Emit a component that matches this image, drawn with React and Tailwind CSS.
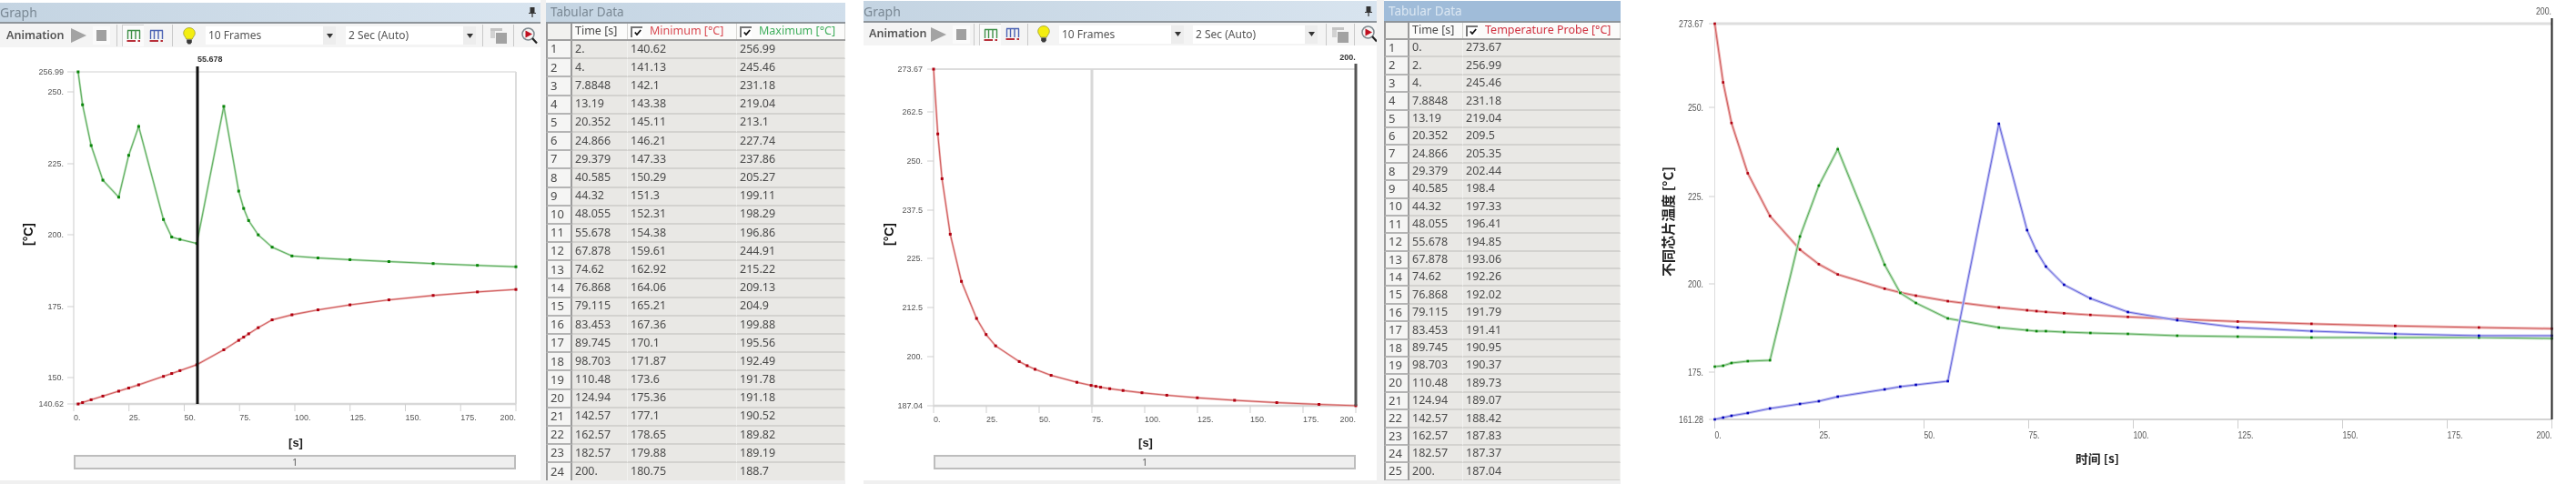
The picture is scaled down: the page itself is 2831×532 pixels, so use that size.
const T1 = [
  ["2.", "140.62", "256.99"], ["4.", "141.13", "245.46"], ["7.8848", "142.1", "231.18"], ["13.19", "143.38", "219.04"],
  ["20.352", "145.11", "213.1"], ["24.866", "146.21", "227.74"], ["29.379", "147.33", "237.86"], ["40.585", "150.29", "205.27"],
  ["44.32", "151.3", "199.11"], ["48.055", "152.31", "198.29"], ["55.678", "154.38", "196.86"], ["67.878", "159.61", "244.91"],
  ["74.62", "162.92", "215.22"], ["76.868", "164.06", "209.13"], ["79.115", "165.21", "204.9"], ["83.453", "167.36", "199.88"],
  ["89.745", "170.1", "195.56"], ["98.703", "171.87", "192.49"], ["110.48", "173.6", "191.78"], ["124.94", "175.36", "191.18"],
  ["142.57", "177.1", "190.52"], ["162.57", "178.65", "189.82"], ["182.57", "179.88", "189.19"], ["200.", "180.75", "188.7"],
];
const T2 = [
  ["0.", "273.67"], ["2.", "256.99"], ["4.", "245.46"], ["7.8848", "231.18"], ["13.19", "219.04"], ["20.352", "209.5"],
  ["24.866", "205.35"], ["29.379", "202.44"], ["40.585", "198.4"], ["44.32", "197.33"], ["48.055", "196.41"], ["55.678", "194.85"],
  ["67.878", "193.06"], ["74.62", "192.26"], ["76.868", "192.02"], ["79.115", "191.79"], ["83.453", "191.41"], ["89.745", "190.95"],
  ["98.703", "190.37"], ["110.48", "189.73"], ["124.94", "189.07"], ["142.57", "188.42"], ["162.57", "187.83"], ["182.57", "187.37"],
  ["200.", "187.04"],
];
const GREEN3 = [403, 402, 399, 397, 396, 260, 204, 164, 291, 322, 333, 350, 360, 363, 364, 364, 365, 366, 367, 369, 370, 371, 371, 371, 372];
const BLUE3 = [461, 459, 457, 454, 449, 444, 441, 436, 428, 425, 423, 419, 136, 253, 276, 293, 313, 328, 343, 352, 360, 364, 367, 369, 369];

const RED = { halo: "#eeb4b4", line: "#cf5c5c", dot: "#b00010" };
const GRN = { halo: "#b9e0b9", line: "#5cab5c", dot: "#0a860a" };
const BLU = { halo: "#c2c2f2", line: "#6565dc", dot: "#0000b8" };
const LABEL = '"Liberation Sans", sans-serif';

function Series({ pts, c, size = 3, halo = 2.4, line = 1 }) {
  const p = pts.map((q) => q.join(",")).join(" ");
  return (
    <g>
      <polyline points={p} fill="none" stroke={c.halo} strokeWidth={halo} />
      <polyline points={p} fill="none" stroke={c.line} strokeWidth={line} />
      {pts.map((q, i) => (
        <rect key={i} x={q[0] - size / 2} y={q[1] - size / 2} width={size} height={size} fill={c.dot} />
      ))}
    </g>
  );
}

function SmallText({ x, y, anchor = "end", children, size = 9, len }) {
  return (
    <text x={x} y={y} textAnchor={anchor} fontSize={size} fontFamily={LABEL} fill="#555" textLength={len} lengthAdjust={len ? "spacingAndGlyphs" : undefined}>
      {children}
    </text>
  );
}

function Axes({ l, r, t, b, xs, ys, xw, tickY, labelX, labelY, topW = 1, grid = "#d0d0d0" }) {
  return (
    <g>
      <line x1={l} x2={r} y1={t} y2={t} stroke={grid} strokeWidth={topW} />
      <line x1={l} x2={l} y1={t} y2={b} stroke="#dcdcdc" strokeWidth="1.5" />
      <line x1={r} x2={r} y1={t} y2={b} stroke="#dcdcdc" strokeWidth="2" />
      <line x1={l} x2={r} y1={b} y2={b} stroke="#d8d8d8" strokeWidth="2.5" />
      {ys.map(([lab, y], i) => (
        <g key={i}>
          <line x1={l - tickY} x2={l} y1={y} y2={y} stroke="#cfcfcf" />
          <SmallText x={labelX} y={y + 3}>{lab}</SmallText>
        </g>
      ))}
      {xs.map((lab, i) => {
        const x = l + (i * xw) / 8;
        return (
          <g key={i}>
            <line x1={x} x2={x} y1={b} y2={b + 8} stroke="#cfcfcf" />
            <SmallText x={x} y={labelY} anchor={i === 8 ? "end" : "start"}>{lab}</SmallText>
          </g>
        );
      })}
    </g>
  );
}

const XL = ["0.", "25.", "50.", "75.", "100.", "125.", "150.", "175.", "200."];

function Chart1() {
  const X = (t) => 81 + parseFloat(t) * 2.43;
  const Y = (v) => 79 + (256.99 - parseFloat(v)) * 3.137;
  return (
    <svg className="h-[448px] w-[594px] shrink-0" viewBox="0 52 594 448">
      <Axes l={81} r={567} t={79} b={444} xw={486} tickY={7} labelX={70} labelY={462} xs={XL}
        ys={[["256.99", 79], ["250.", 101], ["225.", 180], ["200.", 258], ["175.", 337], ["150.", 415], ["140.62", 444]]} />
      <Series pts={T1.map((r) => [X(r[0]), Y(r[2])])} c={GRN} />
      <Series pts={T1.map((r) => [X(r[0]), Y(r[1])])} c={RED} />
      <rect x={215.5} y={73} width={3} height={371} fill="#111" />
      <text x={217} y={68} fontSize="9" fontWeight="700" fontFamily={LABEL} fill="#333">55.678</text>
      <text transform="translate(36 270) rotate(-90)" fontSize="14" fontWeight="700" fontFamily={LABEL} fill="#111">[°C]</text>
      <text x={325} y={491} textAnchor="middle" fontSize="13" fontWeight="700" fontFamily={LABEL} fill="#222">[s]</text>
    </svg>
  );
}

function Chart2() {
  const X = (t) => 77 + parseFloat(t) * 2.32;
  const Y = (v) => 76 + (273.67 - parseFloat(v)) * 4.27;
  return (
    <svg className="h-[450px] w-[564px] shrink-0" viewBox="0 50 564 450">
      <Axes l={77} r={541} t={76} b={446} xw={464} tickY={7} labelX={65} labelY={464} xs={XL} topW={1.5}
        ys={[["273.67", 76], ["262.5", 123], ["250.", 177], ["237.5", 231], ["225.", 284], ["212.5", 338], ["200.", 392], ["187.04", 446]]} />
      <line x1={251} x2={251} y1={76} y2={446} stroke="#d8d8d8" strokeWidth="3" />
      <Series pts={T2.map((r) => [X(r[0]), Y(r[1])])} c={RED} />
      <rect x={539.5} y={70} width={3} height={376} fill="#555" />
      <text x={532} y={66} textAnchor="middle" fontSize="9" fontWeight="700" fontFamily={LABEL} fill="#333">200.</text>
      <text transform="translate(33 270) rotate(-90)" fontSize="14" fontWeight="700" fontFamily={LABEL} fill="#111">[°C]</text>
      <text x={310} y={491} textAnchor="middle" fontSize="13" fontWeight="700" fontFamily={LABEL} fill="#222">[s]</text>
    </svg>
  );
}

function Chart3() {
  const X = (t) => 103.5 + parseFloat(t) * 4.6;
  const Y = (v) => 26 + (273.67 - parseFloat(v)) * 3.87;
  const tw = (s) => s.length * 5 - (s.split(".").length - 1) * 3;
  const ys = [["273.67", 26], ["250.", 118], ["225.", 216], ["200.", 312], ["175.", 409], ["161.28", 461]];
  return (
    <svg className="h-full w-full" viewBox="0 0 1050 532">
      <line x1={103} x2={1023} y1={26} y2={26} stroke="#dedede" strokeWidth="3" />
      <line x1={103.5} x2={103.5} y1={26} y2={461} stroke="#dcdcdc" />
      <line x1={103} x2={1023} y1={461} y2={461} stroke="#d4d4d4" strokeWidth="2" />
      {ys.map(([lab, y]) => (
        <g key={lab}>
          <line x1={97} x2={103} y1={y} y2={y} stroke="#cfcfcf" />
          <SmallText x={91} y={y + 4} size={10} len={tw(lab)}>{lab}</SmallText>
        </g>
      ))}
      {XL.map((lab, i) => (
        <g key={lab}>
          <line x1={103.5 + i * 115} x2={103.5 + i * 115} y1={461} y2={471} stroke="#cfcfcf" />
          <SmallText x={103.5 + i * 115} y={482} anchor={i === 8 ? "end" : "start"} size={10} len={tw(lab)}>{lab}</SmallText>
        </g>
      ))}
      <Series pts={T2.map((r) => [X(r[0]), Y(r[1])])} c={RED} size={2.6} halo={3} />
      <Series pts={T2.map((r, i) => [X(r[0]), GREEN3[i]])} c={GRN} size={2.6} halo={3} />
      <Series pts={T2.map((r, i) => [X(r[0]), BLUE3[i]])} c={BLU} size={2.6} halo={3} />
      <rect x={1022.5} y={20} width={2} height={441} fill="#222" />
      <SmallText x={1023} y={16} size={10} len={17}>200.</SmallText>
      <text transform="translate(58 304) rotate(-90)" fontSize="15" fontWeight="700" fontFamily={'"Noto Sans CJK SC", sans-serif'} fill="#222" textLength="121" lengthAdjust="spacingAndGlyphs">不同芯片温度 [°C]</text>
      <text x={524} y={509} textAnchor="middle" fontSize="13" fontWeight="700" fontFamily={'"Noto Sans CJK SC", sans-serif'} fill="#222" textLength="48" lengthAdjust="spacingAndGlyphs">时间 [s]</text>
    </svg>
  );
}

function BarsIcon({ c }) {
  return (
    <svg width="16" height="15" viewBox="0 0 16 15" className="shrink-0">
      <path d="M1 1.5H15M1.5 1.5V11M5.5 1.5V11M10 1.5V11M14.5 1.5V11" stroke={c} strokeWidth="1.4" fill="none" />
      <path d="M0.5 13H10M12.5 13H15" stroke="#b8303a" strokeWidth="2" />
    </svg>
  );
}

function Sep() {
  return <div className="h-[24px] w-px shrink-0 bg-[#c9c9c9]" />;
}

function Drop({ text, box, gap }) {
  return (
    <div className={`flex h-[20px] shrink-0 items-stretch ${gap}`}>
      <div className={`flex items-center bg-white pl-[3px] text-[12px] text-[#555] ${box}`}>{text}</div>
      <div className="flex w-[14px] items-center justify-center bg-[#ededed]">
        <svg width="7" height="5" viewBox="0 0 7 5"><path d="M0 0H7L3.5 5Z" fill="#333" /></svg>
      </div>
    </div>
  );
}

function Toolbar({ c }) {
  return (
    <div className={`flex shrink-0 items-center bg-[#f4f4f4] text-[#444] ${c.bar}`}>
      <div className={`shrink-0 text-[12.5px] font-semibold leading-none text-[#555] ${c.anim}`}>Animation</div>
      <svg width="17" height="16" viewBox="0 0 17 16" className={`shrink-0 ${c.play}`}><path d="M0 0L17 8L0 16Z" fill="#a3a3a3" /></svg>
      <div className={`flex h-[20px] w-[19px] shrink-0 items-center justify-center bg-[#fafafa] ${c.stop}`}>
        <div className="h-[12px] w-[11px] bg-[#a0a0a0]" />
      </div>
      <div className={`shrink-0 ${c.sep1}`}><Sep /></div>
      <div className={`flex h-[24px] w-[24px] shrink-0 items-center justify-center border-l border-t border-[#d0d0d0] bg-[#fbfbfb] ${c.tog}`}>
        <BarsIcon c="#3f9048" />
      </div>
      <div className={`shrink-0 ${c.blue}`}><BarsIcon c="#4a62b4" /></div>
      <div className={`shrink-0 ${c.sep2}`}><Sep /></div>
      <svg width="14" height="19" viewBox="0 0 14 19" className={`shrink-0 ${c.bulb}`}>
        <path d="M7 .6C3.2.6.7 3.3.7 6.6c0 2.6 2.3 3.9 3 6.4h6.6c.7-2.5 3-3.8 3-6.4C13.300 3.300 10.800.6 7 .6Z" fill="#f4ee10" stroke="#9a9a30" strokeWidth=".8" />
        <path d="M4.200 13.500h5.600v3l-1.500 2h-2.600l-1.500-2Z" fill="#3a3a3a" />
      </svg>
      <Drop text="10 Frames" box={c.boxW} gap={c.dd1} />
      <Drop text="2 Sec (Auto)" box={c.boxW} gap={c.dd2} />
      <div className={`shrink-0 ${c.sep3}`}><Sep /></div>
      <svg width="18" height="18" viewBox="0 0 18 18" className={`shrink-0 ${c.copy}`}>
        <rect x="0" y="1" width="13" height="3" fill="#c4c4c4" />
        <rect x="0" y="4" width="5" height="8" fill="#d2d2d2" />
        <rect x="6" y="6" width="12" height="12" fill="#a2a2a2" />
      </svg>
      <div className={`shrink-0 ${c.sep4}`}><Sep /></div>
      <svg width="18" height="19" viewBox="0 0 18 19" className={`shrink-0 ${c.zoom}`}>
        <circle cx="7.500" cy="7.500" r="6.500" fill="#f4f4f4" stroke="#7f8a90" strokeWidth="1.500" />
        <path d="M4.500 3.500L12 7.500L4.500 11.500Z" fill="#c01020" />
        <path d="M12 12L17 17.500" stroke="#222" strokeWidth="2.200" />
      </svg>
    </div>
  );
}

function Pin() {
  return (
    <svg width="8" height="11" viewBox="0 0 8 11" className="shrink-0">
      <path d="M1.500 0H6.500V6H8V7H4.600V11H3.400V7H0V6H1.500Z" fill="#333" />
    </svg>
  );
}

function Cell({ className, children }) {
  return <div className={`flex shrink-0 items-center pl-[3px] ${className}`}>{children}</div>;
}

function Check() {
  return (
    <div className="flex h-[12px] w-[13px] shrink-0 items-center justify-center border-l-2 border-t-2 border-[#777] bg-white">
      <svg width="8" height="7" viewBox="0 0 8 7"><path d="M.8 3.500L3 6L7.200 1" stroke="#111" strokeWidth="1.800" fill="none" /></svg>
    </div>
  );
}

function Table({ title, titleCls, wrap, rowH, headers, rows, widths, lastW }) {
  return (
    <div className={`flex h-full shrink-0 flex-col ${wrap}`}>
      <div className={`flex shrink-0 items-center border-b-2 border-[#8e959b] pl-[5px] text-[13.5px] ${titleCls}`}>{title}</div>
      <div className="flex-1 overflow-hidden text-[12.5px] text-[#4a4a4a]">
        <div className="flex h-[19px] border-b-2 border-[#a0a0a0] bg-[#f1f1ef]">
          <div className={`shrink-0 border-l-2 border-r-2 border-[#999] ${widths[0]}`} />
          {headers.map((h, i) => (
            <Cell key={i} className={`border-r border-[#d5d5d2] bg-[#fbfbfa] ${i === 0 ? widths[1] : i === headers.length - 1 ? lastW : widths[2]}`}>
              {h.check && <Check />}
              <span className={`whitespace-nowrap ${h.check ? "ml-[8px]" : ""} ${h.cls}`}>{h.text}</span>
            </Cell>
          ))}
        </div>
        {rows.map((r, i) => (
          <div key={i} className={`flex bg-[#e9e8e5] ${rowH}`}>
            <div className={`flex shrink-0 items-center border-b-2 border-l-2 border-r-2 border-b-[#b4b4b4] border-l-[#9a9a9a] border-r-[#9a9a9a] bg-[#f5f5f4] pl-[3px] text-[13px] ${widths[0]}`}>{i + 1}</div>
            {r.map((v, j) => (
              <Cell key={j} className={`border-b-2 border-r border-b-[#d3d2cf] border-r-[#f2f2f0] ${j === 0 ? widths[1] : j === r.length - 1 ? lastW : widths[2]}`}>{v}</Cell>
            ))}
          </div>
        ))}
      </div>
      <div className="h-[4px] shrink-0 bg-[#f0f0f0]" />
    </div>
  );
}

function GraphPanel({ wrap, titleCls, toolbar, chart, barCls }) {
  return (
    <div className={`flex h-full shrink-0 flex-col bg-white ${wrap}`}>
      <div className={`flex shrink-0 items-center justify-between border-b-2 border-[#8e959b] bg-gradient-to-r from-[#c4d4e2] to-[#d8e4ef] pr-[5px] text-[14px] text-[#7a8894] ${titleCls}`}>
        <span>Graph</span>
        <Pin />
      </div>
      <Toolbar c={toolbar} />
      {chart}
      <div className={`flex h-[16px] shrink-0 items-center justify-center border-2 border-[#bdbdbd] bg-[#efefef] text-[10px] text-[#555] ${barCls}`}>1</div>
      <div className="flex-1" />
      <div className="h-[4px] shrink-0 bg-[#f0f0f0]" />
    </div>
  );
}

const TB1 = {
  bar: "h-[26px]",
  anim: "ml-[7px] w-[62px]", play: "ml-[9px]", stop: "ml-[7px]", sep1: "ml-[7px]", tog: "ml-[5px]", blue: "ml-[6px]",
  sep2: "ml-[9px]", bulb: "ml-[11px]", boxW: "w-[129px]", dd1: "ml-[11px]", dd2: "ml-[11px]", sep3: "ml-[7px]",
  copy: "ml-[8px]", sep4: "ml-[7px]", zoom: "ml-[8px]",
};
const TB2 = {
  bar: "h-[25px]",
  anim: "ml-[6px] w-[62px]", play: "ml-[6px]", stop: "ml-[7px]", sep1: "ml-[4px]", tog: "ml-[5px]", blue: "ml-[5px]",
  sep2: "ml-[8px]", bulb: "ml-[10px]", boxW: "w-[123px]", dd1: "ml-[10px]", dd2: "ml-[10px]", sep3: "ml-[9px]",
  copy: "ml-[6px]", sep4: "ml-[6px]", zoom: "ml-[7px]",
};

export default function App() {
  return (
    <div className="flex h-[532px] w-[2831px] overflow-hidden bg-white blur-[0.6px]" style={{ fontFamily: '"Noto Sans", sans-serif' }}>
      <GraphPanel wrap="w-[594px] pt-[3px]" titleCls="h-[23px]" toolbar={TB1} chart={<Chart1 />} barCls="ml-[81px] w-[486px]" />
      <div className="h-full w-[6px] shrink-0 bg-[#f1f1f1]" />
      <Table
        wrap="w-[329px] pt-[3px]"
        title="Tabular Data"
        titleCls="h-[23px] bg-gradient-to-r from-[#c4d4e2] to-[#d0deeb] text-[#7a8894]"
        rowH="h-[20.2px]"
        widths={["w-[29px]", "w-[61px]", "w-[120px]"]}
        lastW="w-[119px]"
        headers={[
          { text: "Time [s]", cls: "" },
          { text: "Minimum [°C]", cls: "text-[#d8474f]", check: true },
          { text: "Maximum [°C]", cls: "text-[#3fae5c]", check: true },
        ]}
        rows={T1}
      />
      <div className="h-full w-[20px] shrink-0 bg-white" />
      <GraphPanel wrap="w-[564px] pt-[1px]" titleCls="h-[24px]" toolbar={TB2} chart={<Chart2 />} barCls="ml-[77px] w-[464px]" />
      <div className="h-full w-[8px] shrink-0 bg-[#f1f1f1]" />
      <Table
        wrap="w-[260px] pt-[1px]"
        title="Tabular Data"
        titleCls="h-[24px] bg-[#a0bcd9] text-[#dbe7f2]"
        rowH="h-[19.4px]"
        widths={["w-[28px]", "w-[59px]", "w-[173px]"]}
        lastW="w-[173px]"
        headers={[
          { text: "Time [s]", cls: "" },
          { text: "Temperature Probe [°C]", cls: "text-[#d0303f]", check: true },
        ]}
        rows={T2}
      />
      <div className="h-full flex-1 bg-white"><Chart3 /></div>
    </div>
  );
}
